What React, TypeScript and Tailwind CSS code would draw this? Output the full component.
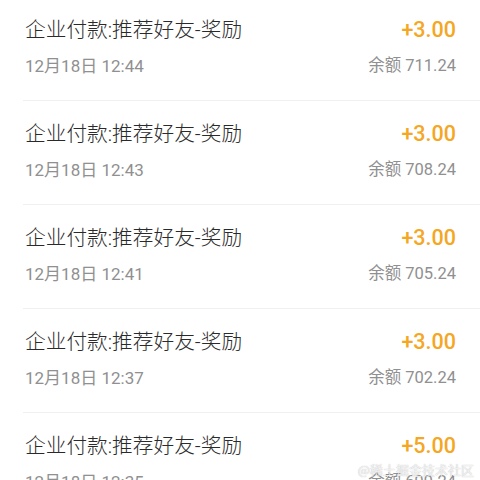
import React from 'react';

const records = [
  { title: '企业付款:推荐好友-奖励', time: '12月18日 12:44', amount: '+3.00', balance: '711.24' },
  { title: '企业付款:推荐好友-奖励', time: '12月18日 12:43', amount: '+3.00', balance: '708.24' },
  { title: '企业付款:推荐好友-奖励', time: '12月18日 12:41', amount: '+3.00', balance: '705.24' },
  { title: '企业付款:推荐好友-奖励', time: '12月18日 12:37', amount: '+3.00', balance: '702.24' },
  { title: '企业付款:推荐好友-奖励', time: '12月18日 12:35', amount: '+5.00', balance: '699.24' },
];

const App: React.FC = () => {
  return (
    <div className="relative h-[480px] w-[480px] overflow-hidden bg-white font-['Roboto','Noto_Sans_CJK_SC',sans-serif]">
      <ul className="-mt-[3px] pl-[23px]">
        {records.map((r, i) => (
          <li key={i} className="flex justify-between border-b border-[#f0f0f0] pt-[19px] pb-[22px] pr-6">
            <div className="flex flex-col gap-[10px] pl-[2px]">
              <span className="text-[20.7px] leading-7 font-light text-[#2a2a2a]">{r.title}</span>
              <span className="text-[17px] leading-6 text-[#909090]">{r.time}</span>
            </div>
            <div className="flex flex-col items-end gap-[10px]">
              <span className="text-[21.5px] leading-7 font-medium text-[#f5a623]">{r.amount}</span>
              <span className="text-[16.5px] leading-6 text-[#909090]">余额 {r.balance}</span>
            </div>
          </li>
        ))}
      </ul>

      {/* watermark */}
      <span className="absolute right-[6px] bottom-[2px] text-[13px] leading-4 text-white/80 [text-shadow:0_0_1px_rgba(0,0,0,0.35)] font-['Noto_Sans_CJK_SC',serif]">
        @稀土掘金技术社区
      </span>
    </div>
  );
};

export default App;
